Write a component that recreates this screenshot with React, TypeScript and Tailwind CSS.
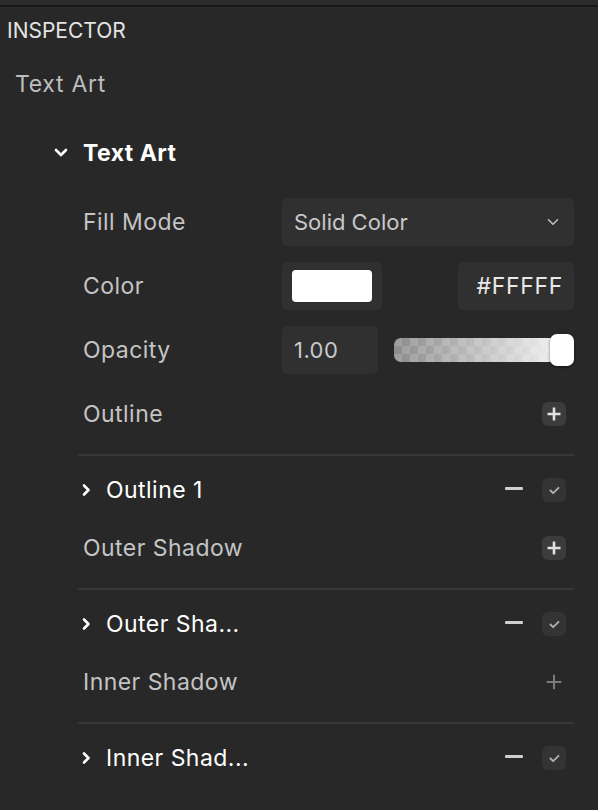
import React from "react";

const ChevronDown = ({ className = "" }: { className?: string }) => (
   <svg viewBox="0 0 14 10" className={className} fill="none">
      <path d="M2 2L7 7L12 2" stroke="currentColor" strokeWidth="2.6" strokeLinecap="round" strokeLinejoin="round" />
   </svg>
);

const ChevronRight = () => (
   <svg viewBox="0 0 10 14" className="w-[10px] h-[14px] text-white" fill="none">
      <path d="M3 2.5L7.5 7L3 11.5" stroke="currentColor" strokeWidth="2.6" strokeLinecap="round" strokeLinejoin="round" />
   </svg>
);

const PlusButton = ({ dim = false }: { dim?: boolean }) => (
   <div className={`w-6 h-6 rounded-[6px] flex items-center justify-center mr-2 ${dim ? "" : "bg-[#3c3c3c]"}`}>
      <svg viewBox="0 0 16 16" className={dim ? "w-[18px] h-[18px] text-[#7a7a7a]" : "w-4 h-4 text-[#e2e2e2]"} fill="none">
         <path d="M8 1.5V14.5M1.5 8H14.5" stroke="currentColor" strokeWidth={dim ? "1.8" : "2.6"} />
      </svg>
   </div>
);

const Separator = () => <div className="h-[2px] bg-[#373737] -ml-[5px] mt-4" />;

const ItemRow = ({ name }: { name: string }) => (
   <div className="flex items-center h-12 mt-[10px]">
      <div className="-ml-[2px] w-[25px]">
         <ChevronRight />
      </div>
      <span className="text-white text-[23px] tracking-[0.02em]">{name}</span>
      <div className="ml-auto flex items-center">
         <div className="w-[18px] h-[3px] bg-[#cfcfcf] rounded-[1px] mr-[19px] -mt-[3px]" />
         <div className="w-6 h-6 rounded-[6px] bg-[#343434] flex items-center justify-center mr-2">
            <svg viewBox="0 0 12 10" className="w-[11px] h-[9px] text-[#b0b0b0]" fill="none">
               <path d="M1.5 5L4.5 8L10.5 2" stroke="currentColor" strokeWidth="2" strokeLinecap="round" strokeLinejoin="round" />
            </svg>
         </div>
      </div>
   </div>
);

const LabelRow = ({ label, dim = false, first = false }: { label: string; dim?: boolean; first?: boolean }) => (
   <div className={`flex items-center h-12 ${first ? "mt-4" : "mt-[10px]"}`}>
      <span className="text-[#c4c4c4] text-[23px] tracking-[0.02em]">{label}</span>
      <div className="ml-auto">
         <PlusButton dim={dim} />
      </div>
   </div>
);

export default function App() {
   return (
      <div className="w-[598px] h-[810px] bg-[#282828] overflow-hidden font-['Inter','Liberation_Sans',sans-serif]">
         <div className="h-[5px] bg-[#2b2b2b]" />
         <div className="h-[2px] bg-[#181818]" />
         <div className="mt-3 h-6 leading-6 pl-[7px] text-[21px] text-[#e4e4e4]">INSPECTOR</div>
         <div className="mt-[27px] h-7 leading-7 pl-[15px] text-[23px] tracking-[0.03em] text-[#bdbdbd]">Text Art</div>
         <div className="mt-[31px] h-12 flex items-center pl-[54px]">
            <ChevronDown className="w-[14px] h-[10px] text-white" />
            <span className="ml-[15px] text-[23px] tracking-[0.02em] font-bold text-white">Text Art</span>
         </div>

         <div className="mt-[21px] pl-[83px] pr-6 text-[22px]">
            {/* Fill mode */}
            <div className="flex items-center h-12">
               <span className="w-[199px] text-[#c4c4c4] text-[23px] tracking-[0.02em]">Fill Mode</span>
               <div className="flex-1 h-12 rounded-[5px] bg-[#303030] flex items-center pl-3 pr-[14px]">
                  <span className="text-[#c8c8c8]">Solid Color</span>
                  <ChevronDown className="ml-auto w-[14px] h-[9px] text-[#bcbcbc] [&>path]:[stroke-width:1.8]" />
               </div>
            </div>

            {/* Color */}
            <div className="flex items-center h-12 mt-4">
               <span className="w-[199px] text-[#c4c4c4] text-[23px] tracking-[0.02em]">Color</span>
               <div className="w-[100px] h-12 rounded-[5px] bg-[#303030] flex items-center pl-[10px]">
                  <div className="w-20 h-8 rounded-[4px] bg-white" />
               </div>
               <div className="ml-auto w-[116px] h-12 rounded-[5px] bg-[#303030] flex items-center justify-end pr-[11px]">
                  <span className="text-[#e8e8e8] text-[23px] tracking-[0.03em]">#FFFFF</span>
               </div>
            </div>

            {/* Opacity */}
            <div className="flex items-center h-12 mt-4">
               <span className="w-[199px] text-[#c4c4c4] text-[23px] tracking-[0.02em]">Opacity</span>
               <div className="w-24 h-12 rounded-[5px] bg-[#303030] flex items-center pl-3">
                  <span className="text-[#c8c8c8] tracking-[0.02em]">1.00</span>
               </div>
               <div className="flex-1 ml-4 relative h-8 flex items-center">
                  <div className="w-full h-6 rounded-[7px] bg-[linear-gradient(to_right,rgba(255,255,255,0.02),rgba(255,255,255,0.95)),repeating-conic-gradient(#8a8a8a_0%_25%,#9b9b9b_0%_50%)] [background-size:100%_100%,16px_16px]" />
                  <div className="absolute right-0 top-0 w-6 h-8 rounded-[7px] bg-white shadow-[0_1px_3px_rgba(0,0,0,0.5)]" />
               </div>
            </div>

            <LabelRow label="Outline" first />
            <Separator />
            <ItemRow name="Outline 1" />

            <LabelRow label="Outer Shadow" />
            <Separator />
            <ItemRow name="Outer Sha..." />

            <LabelRow label="Inner Shadow" dim />
            <Separator />
            <ItemRow name="Inner Shad..." />
         </div>
      </div>
   );
}
